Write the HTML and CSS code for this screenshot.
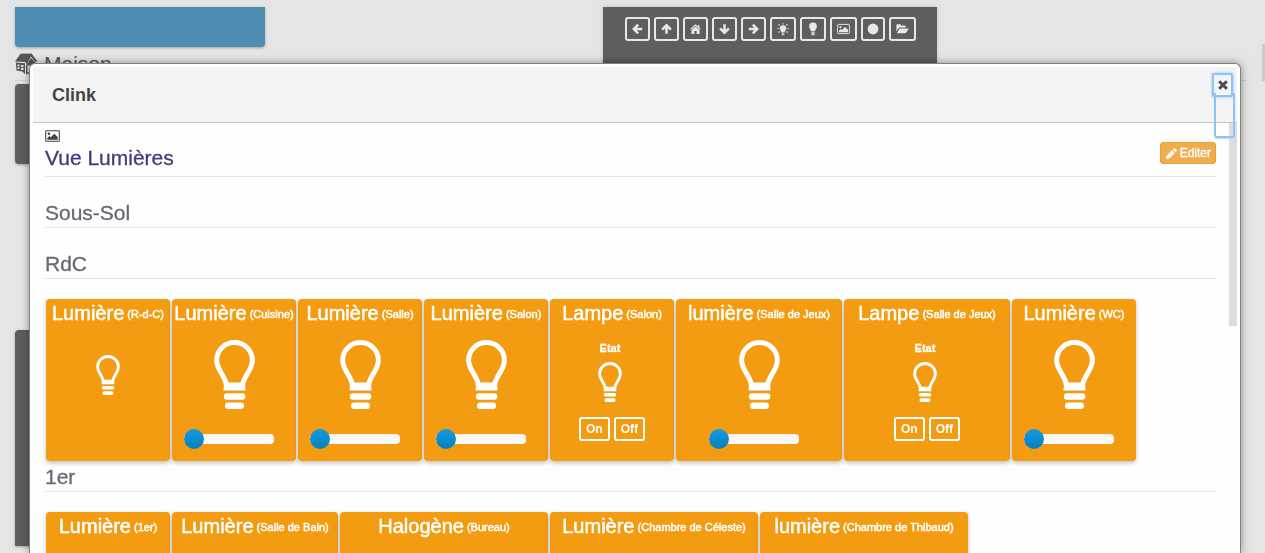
FILE: index.html
```html
<!DOCTYPE html>
<html lang="fr">
<head>
<meta charset="utf-8">
<title>Clink</title>
<meta name="viewport" content="width=device-width, initial-scale=1">
<link rel="stylesheet" href="styles.css">
</head>
<body>
<svg class="sprite" aria-hidden="true">
  <symbol id="bulb" viewBox="0 0 41 69">
    <path fill="none" stroke="currentColor" stroke-width="5" d="M12.300 45C12 37 2.600 30 2.600 20.200C2.600 10.300 10.500 2.600 20.500 2.600S38.400 10.300 38.400 20.200C38.400 30 29 37 28.700 45"/>
    <path fill="currentColor" d="M10 42.500h21l.5 8h-22z"/>
    <rect fill="currentColor" x="9.800" y="53.300" width="21.600" height="6.400" rx="3.200"/>
    <rect fill="currentColor" x="11" y="62.500" width="19" height="6.400" rx="3.200"/>
  </symbol>
  <symbol id="arrow" viewBox="0 0 12 12">
    <path fill="none" stroke="currentColor" stroke-width="2.700" d="M6.700 1.200L2 6L6.700 10.800M2 6H11.300"/>
  </symbol>
  <symbol id="picture" viewBox="0 0 15 12">
    <rect x=".7" y=".7" width="13.600" height="10.600" rx=".8" fill="none" stroke="currentColor" stroke-width="1.100"/>
    <circle cx="3.900" cy="3.700" r="1.300" fill="currentColor"/>
    <path fill="currentColor" d="M2.300 9.800V7.900L4.400 6L5.700 7.200L9.200 3.700L12.700 7V9.800z"/>
  </symbol>
</svg>

<main class="page">
  <div class="top-row">
    <div class="blue-tile"></div>
    <nav class="toolbar" aria-label="Navigation">
      <button aria-label="Gauche"><svg width="11" height="12"><use href="#arrow"/></svg></button>
      <button aria-label="Haut"><svg width="11" height="12" viewBox="0 0 12 12"><path fill="none" stroke="currentColor" stroke-width="2.700" d="M1.200 6.700L6 2L10.800 6.700M6 2V11.300"/></svg></button>
      <button aria-label="Accueil"><svg width="11" height="12" viewBox="0 0 12 12"><path fill="none" stroke="currentColor" stroke-width="1.400" d="M.6 6.400L6 1.700L11.400 6.400"/><path fill="currentColor" d="M8.600 1.500h1.500v3l-1.500-1.200zM6 3.400L10.400 7.200V11.400H7.200V8.200H4.800V11.400H1.600V7.200z"/></svg></button>
      <button aria-label="Bas"><svg width="11" height="12" viewBox="0 0 12 12"><path fill="none" stroke="currentColor" stroke-width="2.700" d="M1.200 5.300L6 10L10.800 5.300M6 10V.7"/></svg></button>
      <button aria-label="Droite"><svg width="11" height="12" viewBox="0 0 12 12"><path fill="none" stroke="currentColor" stroke-width="2.700" d="M5.300 1.200L10 6L5.300 10.800M10 6H.7"/></svg></button>
      <button aria-label="Allumer"><svg width="12" height="13" viewBox="0 0 12 13"><path fill="currentColor" d="M6 2.300a3.200 3.200 0 0 1 3.200 3.200C9.200 7.500 7.600 8 7.500 9.500H4.500C4.400 8 2.800 7.500 2.800 5.500A3.200 3.200 0 0 1 6 2.300z"/><path fill="currentColor" opacity=".75" d="M4.700 9.900h2.600v1.900L6 12.800l-1.300-1z"/><path stroke="currentColor" stroke-width="1.200" stroke-dasharray="1.400 20" d="M6 .2v2M1.500 1.500l1.500 1.500M10.500 1.500L9 3M.3 5.500h2M11.700 5.500h-2M1.500 9.500L3 8M10.500 9.500L9 8"/></svg></button>
      <button aria-label="Lumière"><svg width="12" height="14" viewBox="0 0 12 14"><path fill="currentColor" d="M6 .5a3.900 3.900 0 0 1 3.900 3.900C9.900 6.500 8.200 7.200 8 9H4C3.800 7.200 2.100 6.500 2.100 4.400A3.900 3.900 0 0 1 6 .5z"/><path fill="currentColor" opacity=".75" d="M4.200 9.500h3.600v2.800L7 13.500H5l-.8-1.200z"/></svg></button>
      <button aria-label="Vue"><svg width="13" height="12"><use href="#picture"/></svg></button>
      <button class="dot" aria-label="Cercle"><svg width="12" height="12" viewBox="0 0 12 12"><circle cx="6" cy="6" r="5.400" fill="currentColor"/></svg></button>
      <button aria-label="Dossier"><svg width="13" height="12" viewBox="0 0 13 12"><path fill="currentColor" d="M.4 8.500V2.200Q.4 1.300 1.300 1.300H4Q4.900 1.300 4.900 2.400H8.700Q9.700 2.400 9.700 3.400V4.600H4Q3 4.600 2.300 5.600zM4 5.400H12.700L10.400 9.500Q10 10.200 9 10.200H.9L3 6.200Q3.400 5.400 4 5.400z"/></svg></button>
    </nav>
  </div>
  <h2 class="room">
    <svg width="23" height="22" viewBox="0 0 23 22"><path fill="currentColor" d="M5.500.8L16.500.5L22.500 8.500L20 9L16 3.500L11.500 11.500L10.300 9L0 8.500z"/><path fill="currentColor" d="M.8 9.500L10 10.300V21L7.500 18.500L1.500 17.500zM11 12.500L16 4.800L20.500 10V18L11 21.500z"/><path fill="#e5e5e5" d="M2.500 11.500h2v1.800h-2zM2.500 14.300h2v1.800h-2zM6 12h2.500v2H6zM6 15h2.500v2H6zM12.500 12.500h2.500v6l-2.500 1zM16.500 12h2.200v3h-2.200z"/></svg>
    <span>Maison</span>
  </h2>
  <div class="dark-tile short"></div>
  <div class="dark-tile tall"></div>
  <div class="page-scroll"></div>
</main>

<section class="dialog" role="dialog" aria-labelledby="dialog-title">
  <header class="dialog-head">
    <h1 id="dialog-title">Clink</h1>
    <button class="close" aria-label="Fermer"><svg width="10" height="10" viewBox="0 0 10 10"><path stroke="currentColor" stroke-width="3" d="M1.200 1.200L8.800 8.800M8.800 1.200L1.200 8.800"/></svg></button>
  </header>
  <div class="dialog-body">
    <div class="view-head">
      <div>
        <svg class="view-icon" width="15" height="12"><use href="#picture"/></svg>
        <a class="view-title" href="#">Vue Lumières</a>
      </div>
      <button class="edit"><svg width="11" height="11" viewBox="0 0 11 11"><path fill="currentColor" d="M0 11L.8 7.400L6 2.200L8.800 5L3.600 10.200zM6.700 1.500L7.700.5Q8.300 0 8.900.5L10.500 2.100Q11 2.700 10.500 3.300L9.500 4.300z"/></svg>Editer</button>
    </div>
    <h2 class="section">Sous-Sol</h2>
    <h2 class="section">RdC</h2>
    <div class="tiles">
      <article class="tile"><h3>Lumière<small> (R-d-C)</small></h3><div class="state alone"><svg class="small-bulb"><use href="#bulb"/></svg></div></article>
      <article class="tile"><h3>Lumière<small> (Cuisine)</small></h3><svg class="big-bulb"><use href="#bulb"/></svg><input type="range" value="0" aria-label="Lumière Cuisine"></article>
      <article class="tile"><h3>Lumière<small> (Salle)</small></h3><svg class="big-bulb"><use href="#bulb"/></svg><input type="range" value="0" aria-label="Lumière Salle"></article>
      <article class="tile"><h3>Lumière<small> (Salon)</small></h3><svg class="big-bulb"><use href="#bulb"/></svg><input type="range" value="0" aria-label="Lumière Salon"></article>
      <article class="tile"><h3>Lampe<small> (Salon)</small></h3><div class="state"><strong>Etat</strong><svg class="small-bulb"><use href="#bulb"/></svg></div><div class="switch"><button>On</button><button>Off</button></div></article>
      <article class="tile medium"><h3>lumière<small> (Salle de Jeux)</small></h3><svg class="big-bulb"><use href="#bulb"/></svg><input type="range" value="0" aria-label="Lumière Salle de Jeux"></article>
      <article class="tile medium"><h3>Lampe<small> (Salle de Jeux)</small></h3><div class="state"><strong>Etat</strong><svg class="small-bulb"><use href="#bulb"/></svg></div><div class="switch"><button>On</button><button>Off</button></div></article>
      <article class="tile"><h3>Lumière<small> (WC)</small></h3><svg class="big-bulb"><use href="#bulb"/></svg><input type="range" value="0" aria-label="Lumière WC"></article>
    </div>
    <h2 class="section">1er</h2>
    <div class="tiles">
      <article class="tile"><h3>Lumière<small> (1er)</small></h3></article>
      <article class="tile medium"><h3>Lumière<small> (Salle de Bain)</small></h3></article>
      <article class="tile wide"><h3>Halogène<small> (Bureau)</small></h3></article>
      <article class="tile wide"><h3>Lumière<small> (Chambre de Céleste)</small></h3></article>
      <article class="tile wide"><h3>lumière<small> (Chambre de Thibaud)</small></h3></article>
    </div>
    <div class="dialog-scroll"></div>
  </div>
</section>
</body>
</html>
```

FILE: styles.css
```css
* {
  box-sizing: border-box;
}

html,
body {
  height: 100%;
}

body {
  margin: 0;
  overflow: hidden;
  background: #e5e5e5;
  font-family: "Liberation Sans", Arial, sans-serif;
  color: #444;
}

h1,
h2,
h3 {
  margin: 0;
  font-weight: normal;
}

button {
  font-family: inherit;
}

svg {
  display: block;
}

.sprite {
  position: absolute;
  width: 0;
  height: 0;
}

/* Page behind the dialog */
.page {
  height: 100%;
  overflow: hidden;
  padding: 7px 19px 0 15px;
}

.top-row {
  display: grid;
  grid-template-columns: 250px 334px;
  grid-template-rows: 40px;
  column-gap: 338px;
}

.blue-tile {
  background: #4f8db5;
  border-radius: 0 0 4px 4px;
  box-shadow: 0 1px 3px rgba(0, 0, 0, 0.3);
}

.toolbar {
  display: flex;
  justify-content: center;
  align-items: flex-start;
  gap: 4px;
  height: 90px;
  padding-top: 10px;
  background: #5e5e5e;
  box-shadow: 0 0 4px rgba(0, 0, 0, 0.15);
}

.toolbar button {
  display: flex;
  align-items: center;
  height: 24px;
  padding: 0 5px;
  border: 2px solid #e8e8e8;
  border-radius: 3px;
  background: none;
  color: #e8e8e8;
}

.toolbar .dot {
  padding: 0 4px;
}

.room {
  display: flex;
  align-items: center;
  gap: 6px;
  height: 34px;
  margin-bottom: 3px;
  border-bottom: 1px solid #d0d0d0;
  font-size: 21px;
  line-height: 34px;
  color: #555;
}

.dark-tile {
  width: 250px;
  border-radius: 4px;
  background: #5e5e5e;
  box-shadow: 0 1px 3px rgba(0, 0, 0, 0.3);
}

.dark-tile.short {
  height: 80px;
  margin-bottom: 166px;
}

.dark-tile.tall {
  height: 216px;
  border-radius: 4px 4px 0 0;
}

.page-scroll {
  position: absolute;
  top: 44px;
  right: 0;
  width: 3px;
  height: 37px;
  background: #ccc;
}

/* Dialog */
.dialog {
  position: fixed;
  inset: 63px 24px 0 29px;
  display: flex;
  flex-direction: column;
  overflow: hidden;
  padding: 3px 3px 0;
  border: 1px solid #808080;
  border-bottom: 0;
  border-radius: 6px 6px 0 0;
  background: #fefefe;
  box-shadow: 0 0 8px rgba(0, 0, 0, 0.4);
}

.dialog-head {
  display: flex;
  flex: none;
  justify-content: space-between;
  height: 56px;
  padding: 7px 6px 0 19px;
  border-bottom: 1px solid #c4c4c4;
  border-radius: 4px 4px 0 0;
  background: #f4f4f4;
}

.dialog-head h1 {
  font-size: 18px;
  font-weight: bold;
  line-height: 42px;
}

.close {
  position: relative;
  display: flex;
  justify-content: center;
  width: 17px;
  height: 20px;
  margin-top: 1px;
  padding: 5px 0 0;
  border: 0;
  border-radius: 1px;
  background: #f4f4f4;
  color: #4a4a4a;
  box-shadow: 0 0 0 2px #8ec3fa, 0 0 2px 3px #bcdcfb;
}

/* Lower part of the focus ring, over the header's edge */
.close::after {
  content: "";
  position: absolute;
  top: 18px;
  left: 0;
  width: 17px;
  height: 43px;
  border: 2px solid #8ec3fa;
  border-top: 0;
  border-radius: 0 0 3px 3px;
  box-shadow: 0 1px 1px #bcdcfb;
}

.close,
.dialog-head {
  z-index: 1;
}

.dialog-body {
  position: relative;
  flex: 1;
  min-height: 0;
  overflow: hidden;
  padding: 7px 21px 0 12px;
}

.dialog-scroll {
  position: absolute;
  top: 0;
  right: 0;
  width: 8px;
  height: 203px;
  background: #ddd;
}

.view-head {
  display: flex;
  justify-content: space-between;
  align-items: flex-start;
  height: 47px;
  margin-bottom: 20px;
  border-bottom: 1px solid #e4e4e4;
}

.view-title {
  display: block;
  margin-top: 1px;
  font-size: 21px;
  line-height: 30px;
  color: #4b3878;
  text-decoration: none;
  -webkit-text-stroke: 0.3px currentColor;
}

.edit {
  display: flex;
  align-items: center;
  gap: 3px;
  height: 22px;
  margin-top: 12px;
  padding: 0 4px 0 5px;
  border: 1px solid #ee9f36;
  border-radius: 3px;
  background: #f0ad4e;
  color: #fff;
  font-size: 12px;
  -webkit-text-stroke: 0.3px currentColor;
}

.section {
  margin-bottom: 20px;
  padding-top: 2px;
  border-bottom: 1px solid #e4e4e4;
  font-size: 21px;
  line-height: 28px;
  color: #6c6676;
  -webkit-text-stroke: 0.3px currentColor;
}

.tiles {
  display: flex;
  flex-wrap: wrap;
  gap: 2px;
  padding-left: 1px;
}

.tile {
  display: flex;
  flex-direction: column;
  align-items: center;
  width: 124px;
  height: 162px;
  border-radius: 4px;
  background: #f39c12;
  color: #fff;
  box-shadow: 0 2px 4px rgba(0, 0, 0, 0.25);
}

.tile.medium {
  width: 166px;
}

.tile.wide {
  width: 208px;
}

.tile h3 {
  height: 41px;
  font-size: 20px;
  line-height: 28px;
  white-space: nowrap;
  -webkit-text-stroke: 0.5px #fff;
}

.tile small {
  font-size: 11px;
  line-height: 11px;
  vertical-align: 2px;
}

.big-bulb {
  width: 41px;
  height: 69px;
}

.small-bulb {
  width: 24px;
  height: 40px;
}

.state {
  display: flex;
  flex-direction: column;
  align-items: center;
  padding-right: 4px;
}

.state.alone {
  padding: 15px 1px 0 0;
}

.state strong {
  height: 22px;
  font-size: 11px;
  line-height: 16px;
  -webkit-text-stroke: 0.3px currentColor;
}

.switch {
  display: flex;
  gap: 4px;
  margin-top: 15px;
}

.switch button {
  height: 24px;
  padding: 0 5px;
  border: 2px solid #fff;
  border-radius: 3px;
  background: none;
  color: #fff;
  font-size: 12px;
  font-weight: bold;
}

input[type="range"] {
  appearance: none;
  width: 90px;
  height: 20px;
  margin: 20px 10px 0 0;
  background: none;
}

input[type="range"]::-webkit-slider-runnable-track {
  height: 10px;
  border-radius: 4px;
  background: linear-gradient(#eee, #f9f9f9 4px);
}

input[type="range"]::-webkit-slider-thumb {
  appearance: none;
  width: 20px;
  height: 20px;
  margin-top: -5px;
  border-radius: 50%;
  background: linear-gradient(#149bdf, #0480be);
}
```
